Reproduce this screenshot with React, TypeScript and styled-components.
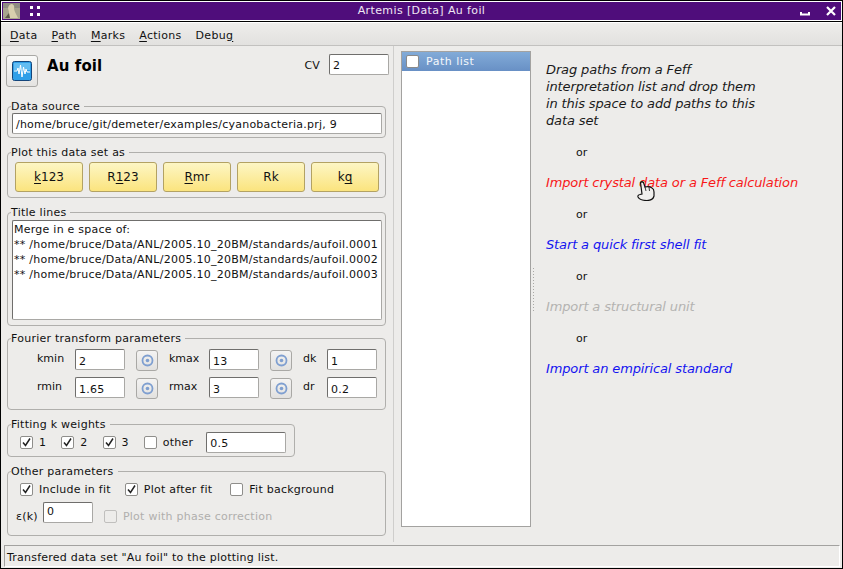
import React from 'react';
import styled, {createGlobalStyle} from 'styled-components';

const Global = createGlobalStyle`
  html, body {
    margin: 0;
    padding: 0;
    background: #edecea;
  }
  body {
    font-family: "DejaVu Sans", sans-serif;
    font-size: 11px;
    color: #111;
  }
`

const Win = styled.div`
  width: 843px;
  height: 569px;
  box-sizing: border-box;
  border: 1px solid #000;
  background: #edecea;
  display: flex;
  flex-direction: column;
  overflow: hidden;
  position: relative;
`
const TitleBar = styled.div`
  height: 20px;
  box-sizing: border-box;
  border: 1px solid #fff;
  box-shadow: 0 1px #000;
  background: #4f0d7b;
  flex: none;
  display: flex;
  align-items: center;
  position: relative;
  color: #f0e8f4;
`
const TitleText = styled.div`
  position: absolute;
  left: 0;
  right: 0;
  top: 2px;
  text-align: center;
  font-size: 11px;
  letter-spacing: 0.38px;
`
const AppIcon = styled.svg`
  width: 17px;
  height: 16px;
  margin-left: 1px;
  flex: none;
`
const Dots = styled.div`
  display: grid;
  grid-template-columns: 3px 3px;
  gap: 4px;
  margin-left: 10px;
  & > i {
    width: 3px;
    height: 3px;
    background: #fff;
  }
`
const WinButtons = styled.div`
  margin-left: auto;
  display: flex;
  align-items: center;
  gap: 15px;
  margin-right: 5px;
  z-index: 1;
`
const MenuBar = styled.div`
  margin-top: 1px;
  height: 24px;
  flex: none;
  display: flex;
  padding: 2px 0 0 9px;
  gap: 14px;
  align-items: center;
  box-sizing: border-box;
  background: linear-gradient(#eeedeb, #e2e1df);
  border-top: 1px solid #fff;
  border-bottom: 1px solid #c2c1bf;
  font-size: 11px;
  letter-spacing: 0.3px;
  & u {
    text-underline-offset: 2px;
  }
`
const Main = styled.div`
  flex: 1;
  display: flex;
  min-height: 0;
`
const LeftPane = styled.div`
  width: 393px;
  height: 496px;
  flex: none;
  padding: 9px 0 0 5px;
  box-sizing: border-box;
  border-right: 1px solid #cfcecc;
`
const Header = styled.div`
  display: flex;
  align-items: flex-start;
  height: 44px;
`
const IconButton = styled.div`
  width: 32px;
  height: 32px;
  box-sizing: border-box;
  border: 1px solid #a9a8a5;
  border-radius: 3px;
  background: linear-gradient(#fafaf9, #e4e3e1);
  display: flex;
  align-items: center;
  justify-content: center;
`
const Heading = styled.div`
  font-size: 15px;
  font-weight: bold;
  color: #000;
  margin: 2px 0 0 9px;
  letter-spacing: 0.1px;
`
const CvLabel = styled.span`
  margin-left: auto;
  margin-top: 4px;
  letter-spacing: 0.2px;
`
const Field = styled.div<{$w: number; $ml?: number; $pt?: number}>`
  width: ${p => p.$w}px;
  height: 21px;
  box-sizing: border-box;
  flex: none;
  margin-left: ${p => p.$ml ?? 0}px;
  background: #fff;
  border: 1px solid #a9a8a5;
  border-left-color: #6f6e6c;
  border-top-color: #6f6e6c;
  border-radius: 2px;
  padding: ${p => p.$pt ?? 4}px 0 0 3px;
  font-size: 11px;
  letter-spacing: 0.22px;
  white-space: nowrap;
  overflow: hidden;
`
const CvField = styled(Field)`
  margin-left: 9px;
  margin-right: 4px;
  margin-top: -1px;
`
const Group = styled.fieldset<{$h: number; $w?: number; $mt?: number}>`
  margin: ${p => p.$mt ?? 8}px 0 0 1px;
  padding: 0 3px 0 4px;
  width: ${p => p.$w ?? 379}px;
  height: ${p => p.$h}px;
  box-sizing: border-box;
  border: 1px solid #b0afac;
  border-radius: 4px;
  min-width: 0;
  & > legend {
    padding: 0 4px 0 0;
    margin-left: -1px;
    height: 13px;
    line-height: 13px;
    letter-spacing: 0.25px;
  }
`
const PlotRow = styled.div`
  display: flex;
  gap: 6px;
  padding: 3px 0 0 3px;
`
const PlotButton = styled.div`
  width: 68px;
  height: 30px;
  box-sizing: border-box;
  border: 1px solid #b3a263;
  border-radius: 3px;
  background: linear-gradient(#fdf6c4, #fbe47e);
  display: flex;
  align-items: center;
  justify-content: center;
  font-size: 12px;
  & u {
    text-underline-offset: 2px;
  }
`
const TitleBox = styled.div`
  height: 100px;
  box-sizing: border-box;
  background: #fff;
  border: 1px solid #a9a8a5;
  border-left-color: #6f6e6c;
  border-top-color: #6f6e6c;
  border-radius: 2px;
  padding: 1px 0 0 1px;
  line-height: 15px;
  margin-top: 1px;
  letter-spacing: 0.25px;
  white-space: nowrap;
  overflow: hidden;
`
const FtGrid = styled.div`
  display: grid;
  grid-template-columns: 63px 50px 11px 22px 51px 50px 11px 22px 35px 50px;
  grid-auto-rows: 21px;
  row-gap: 7px;
  padding-top: 4px;
  align-items: center;
`
const FtLabel = styled.span<{$pl: number}>`
  padding-left: ${p => p.$pl}px;
  margin-top: -3px;
`
const Pick = styled.div`
  width: 22px;
  height: 21px;
  box-sizing: border-box;
  margin-top: 2px;
  border: 1px solid #a9a8a5;
  border-radius: 3px;
  background: linear-gradient(#f4f3f2, #e2e1df);
  display: flex;
  align-items: center;
  justify-content: center;
`
const Gap = styled.span``
const CheckRow = styled.div<{$pt?: number}>`
  display: flex;
  align-items: center;
  padding: ${p => p.$pt ?? 1}px 0 0 8px;
  letter-spacing: 0.25px;
`
const Check = styled.label<{$ml?: number; $off?: boolean; $mt?: number}>`
  display: flex;
  align-items: center;
  gap: 6px;
  margin-left: ${p => p.$ml ?? 0}px;
  margin-top: ${p => p.$mt ?? 0}px;
  color: ${p => p.$off ? '#b0afad' : 'inherit'};
`
const Box = styled.span<{$off?: boolean}>`
  width: 13px;
  height: 13px;
  box-sizing: border-box;
  border: 1px solid ${p => p.$off ? '#c0bfbd' : '#8f8e8b'};
  border-radius: 2px;
  background: ${p => p.$off ? '#edecea' : '#fff'};
  display: flex;
  align-items: center;
  justify-content: center;
  flex: none;
`
const PhaseRow = styled.div`
  display: flex;
  align-items: center;
  padding: 6px 0 0 4px;
  letter-spacing: 0.25px;
`
const Epsilon = styled.span`
  margin-top: 8px;
`
const PathPanel = styled.div`
  width: 130px;
  height: 476px;
  margin: 5px 0 0 7px;
  flex: none;
  box-sizing: border-box;
  border: 1px solid #a3a2a0;
  background: #fff;
`
const ListHead = styled.div`
  height: 19px;
  background: linear-gradient(#82abd8, #6890c5);
  color: #f4f7fb;
  display: flex;
  align-items: center;
  padding-left: 4px;
  gap: 7px;
  letter-spacing: 0.5px;
`
const ListBox = styled.span`
  width: 13px;
  height: 13px;
  box-sizing: border-box;
  background: #fff;
  border: 1px solid #8a8a8a;
  border-radius: 2px;
`
const Grip = styled.div`
  width: 1px;
  height: 44px;
  flex: none;
  margin: 222px 0 0 2px;
  background: repeating-linear-gradient(#a9a8a5 0 1px, transparent 1px 3px);
`
const Hints = styled.div`
  margin-left: 12px;
  padding-top: 15px;
  font-size: 13px;
  position: relative;
`
const Hint = styled.div<{$c?: string}>`
  font-style: italic;
  letter-spacing: -0.13px;
  color: ${p => p.$c ?? '#1a1a1a'};
  height: 17px;
  line-height: 17px;
  white-space: nowrap;
`
const Or = styled.div`
  font-size: 11px;
  padding-left: 30px;
  height: 45px;
  line-height: 47px;
  color: #111;
`
const Cursor = styled.svg`
  position: absolute;
  left: 91px;
  top: 135px;
`
const Status = styled.div`
  height: 22px;
  flex: none;
  margin: 0 2px 1px 3px;
  box-sizing: border-box;
  border-top: 1px solid #a3a2a0;
  border-left: 1px solid #a3a2a0;
  padding: 5px 0 0 2px;
  letter-spacing: 0.23px;
  background: #edecea;
  border-right: 1px solid #fff;
  border-bottom: 1px solid #fff;
`

const Tick = () => (
    <svg width="9" height="9" viewBox="0 0 9 9">
        <path d="M1 4.5 L3.5 7.5 L8 0.5" fill="none" stroke="#222" strokeWidth="1.5"/>
    </svg>
)

const Target = () => (
    <svg width="13" height="13" viewBox="0 0 13 13">
        <circle cx="6.5" cy="6.5" r="5" fill="none" stroke="#7f9fd0" strokeWidth="1.8"/>
        <circle cx="6.5" cy="6.5" r="1.8" fill="#7f9fd0"/>
    </svg>
)

type CheckItemProps = {
    label: string
    checked?: boolean
    off?: boolean
    ml?: number
    mt?: number
}
const CheckItem = (props: CheckItemProps) => (
    <Check $ml={props.ml} $off={props.off} $mt={props.mt}>
        <Box $off={props.off}>{props.checked && <Tick/>}</Box>
        {props.label}
    </Check>
)

const ftRows = [
    ['kmin', '2', 'kmax', '13', 'dk', '1'],
    ['rmin', '1.65', 'rmax', '3', 'dr', '0.2'],
]

export default function App() {
    return (
        <Win>
            <Global/>
            <TitleBar>
                <AppIcon viewBox="0 0 17 16">
                    <rect width="17" height="16" fill="#a8a48e"/>
                    <rect x="0" y="0" width="17" height="5" fill="#8f8d82"/>
                    <path d="M6 15 L6 9 L5 5 Q6 1 9 1 Q12 2 11 6 L12 9 L15 15 Z" fill="#d8cfae"/>
                    <path d="M2 15 L6 10 L7 15 Z" fill="#5d5a4a"/>
                </AppIcon>
                <Dots><i/><i/><i/><i/></Dots>
                <TitleText>Artemis [Data] Au foil</TitleText>
                <WinButtons>
                    <svg width="12" height="12" viewBox="0 0 12 12">
                        <path d="M1 6 V9.5 H11 V6 H9 V7.5 H3 V6 Z" fill="#fff" transform="translate(0 1)"/>
                    </svg>
                    <svg width="10" height="10" viewBox="0 0 10 10">
                        <path d="M1 1 L9 9 M9 1 L1 9" stroke="#fff" strokeWidth="2.2"/>
                    </svg>
                </WinButtons>
            </TitleBar>
            <MenuBar>
                <span><u>D</u>ata</span>
                <span><u>P</u>ath</span>
                <span><u>M</u>arks</span>
                <span><u>A</u>ctions</span>
                <span>Debu<u>g</u></span>
            </MenuBar>
            <Main>
                <LeftPane>
                    <Header>
                        <IconButton>
                            <svg width="20" height="20" viewBox="0 0 20 20">
                                <rect x="0.5" y="0.5" width="19" height="19" rx="2" fill="#2f9fe8" stroke="#14457a"/>
                                <rect x="2" y="2" width="16" height="7" fill="#63bdf2"/>
                                <path d="M2 10 H5 L6 7 L7 13 L8.5 4 L10 16 L11.5 6 L13 13 L14 8 L15 11 H18" fill="none" stroke="#fff"/>
                            </svg>
                        </IconButton>
                        <Heading>Au foil</Heading>
                        <CvLabel>CV</CvLabel>
                        <CvField $w={60}>2</CvField>
                    </Header>
                    <Group $h={38} $mt={1}>
                        <legend>Data source</legend>
                        <Field $w={370}>/home/bruce/git/demeter/examples/cyanobacteria.prj, 9</Field>
                    </Group>
                    <Group $h={52}>
                        <legend>Plot this data set as</legend>
                        <PlotRow>
                            <PlotButton><span><u>k</u>123</span></PlotButton>
                            <PlotButton><span>R<u>1</u>23</span></PlotButton>
                            <PlotButton><span><u>R</u>mr</span></PlotButton>
                            <PlotButton>Rk</PlotButton>
                            <PlotButton><span>k<u>q</u></span></PlotButton>
                        </PlotRow>
                    </Group>
                    <Group $h={120}>
                        <legend>Title lines</legend>
                        <TitleBox>
                            Merge in e space of:<br/>
                            ** /home/bruce/Data/ANL/2005.10_20BM/standards/aufoil.0001<br/>
                            ** /home/bruce/Data/ANL/2005.10_20BM/standards/aufoil.0002<br/>
                            ** /home/bruce/Data/ANL/2005.10_20BM/standards/aufoil.0003
                        </TitleBox>
                    </Group>
                    <Group $h={78} $mt={6}>
                        <legend>Fourier transform parameters</legend>
                        <FtGrid>
                            {ftRows.map(r => (
                                <React.Fragment key={r[0]}>
                                    <FtLabel $pl={25}>{r[0]}</FtLabel>
                                    <Field $w={50} $pt={5}>{r[1]}</Field>
                                    <Gap/>
                                    <Pick><Target/></Pick>
                                    <FtLabel $pl={11}>{r[2]}</FtLabel>
                                    <Field $w={50} $pt={5}>{r[3]}</Field>
                                    <Gap/>
                                    <Pick><Target/></Pick>
                                    <FtLabel $pl={11}>{r[4]}</FtLabel>
                                    <Field $w={50} $pt={5}>{r[5]}</Field>
                                </React.Fragment>
                            ))}
                        </FtGrid>
                    </Group>
                    <Group $h={39} $w={288}>
                        <legend>Fitting k weights</legend>
                        <CheckRow>
                            <CheckItem label="1" checked/>
                            <CheckItem label="2" checked ml={15}/>
                            <CheckItem label="3" checked ml={15}/>
                            <CheckItem label="other" ml={15}/>
                            <Field $w={80} $ml={13}>0.5</Field>
                        </CheckRow>
                    </Group>
                    <Group $h={71}>
                        <legend>Other parameters</legend>
                        <CheckRow $pt={5}>
                            <CheckItem label="Include in fit" checked/>
                            <CheckItem label="Plot after fit" checked ml={14}/>
                            <CheckItem label="Fit background" ml={18}/>
                        </CheckRow>
                        <PhaseRow>
                            <Epsilon>ε(k)</Epsilon>
                            <Field $w={50} $ml={5} $pt={2}>0</Field>
                            <CheckItem label="Plot with phase correction" off ml={11} mt={8}/>
                        </PhaseRow>
                    </Group>
                </LeftPane>
                <PathPanel>
                    <ListHead><ListBox/>Path list</ListHead>
                </PathPanel>
                <Grip/>
                <Hints>
                    <Hint>Drag paths from a Feff</Hint>
                    <Hint>interpretation list and drop them</Hint>
                    <Hint>in this space to add paths to this</Hint>
                    <Hint>data set</Hint>
                    <Or>or</Or>
                    <Hint $c="#f81818">Import crystal data or a Feff calculation</Hint>
                    <Or>or</Or>
                    <Hint $c="#1414f0">Start a quick first shell fit</Hint>
                    <Or>or</Or>
                    <Hint $c="#b4b3b1">Import a structural unit</Hint>
                    <Or>or</Or>
                    <Hint $c="#1414f0">Import an empirical standard</Hint>
                    <Cursor width="18" height="20" viewBox="0 0 18 20">
                        <path d="M3.5 1.5 Q5 0 6.5 1.5 L8 6 Q12 5 15 7 Q17 8 17 11 L17 15 Q16 19.5 10 19.5 Q3 19.5 1 16 Q0.5 14 3 13.5 L5 13 Z" fill="#f0efed" stroke="#111" strokeWidth="1.2"/>
                        <path d="M8 6 L9 10 M12 6 L12.5 10" stroke="#111" strokeWidth="0.8"/>
                    </Cursor>
                </Hints>
            </Main>
            <Status>Transfered data set "Au foil" to the plotting list.</Status>
        </Win>
    );
}
